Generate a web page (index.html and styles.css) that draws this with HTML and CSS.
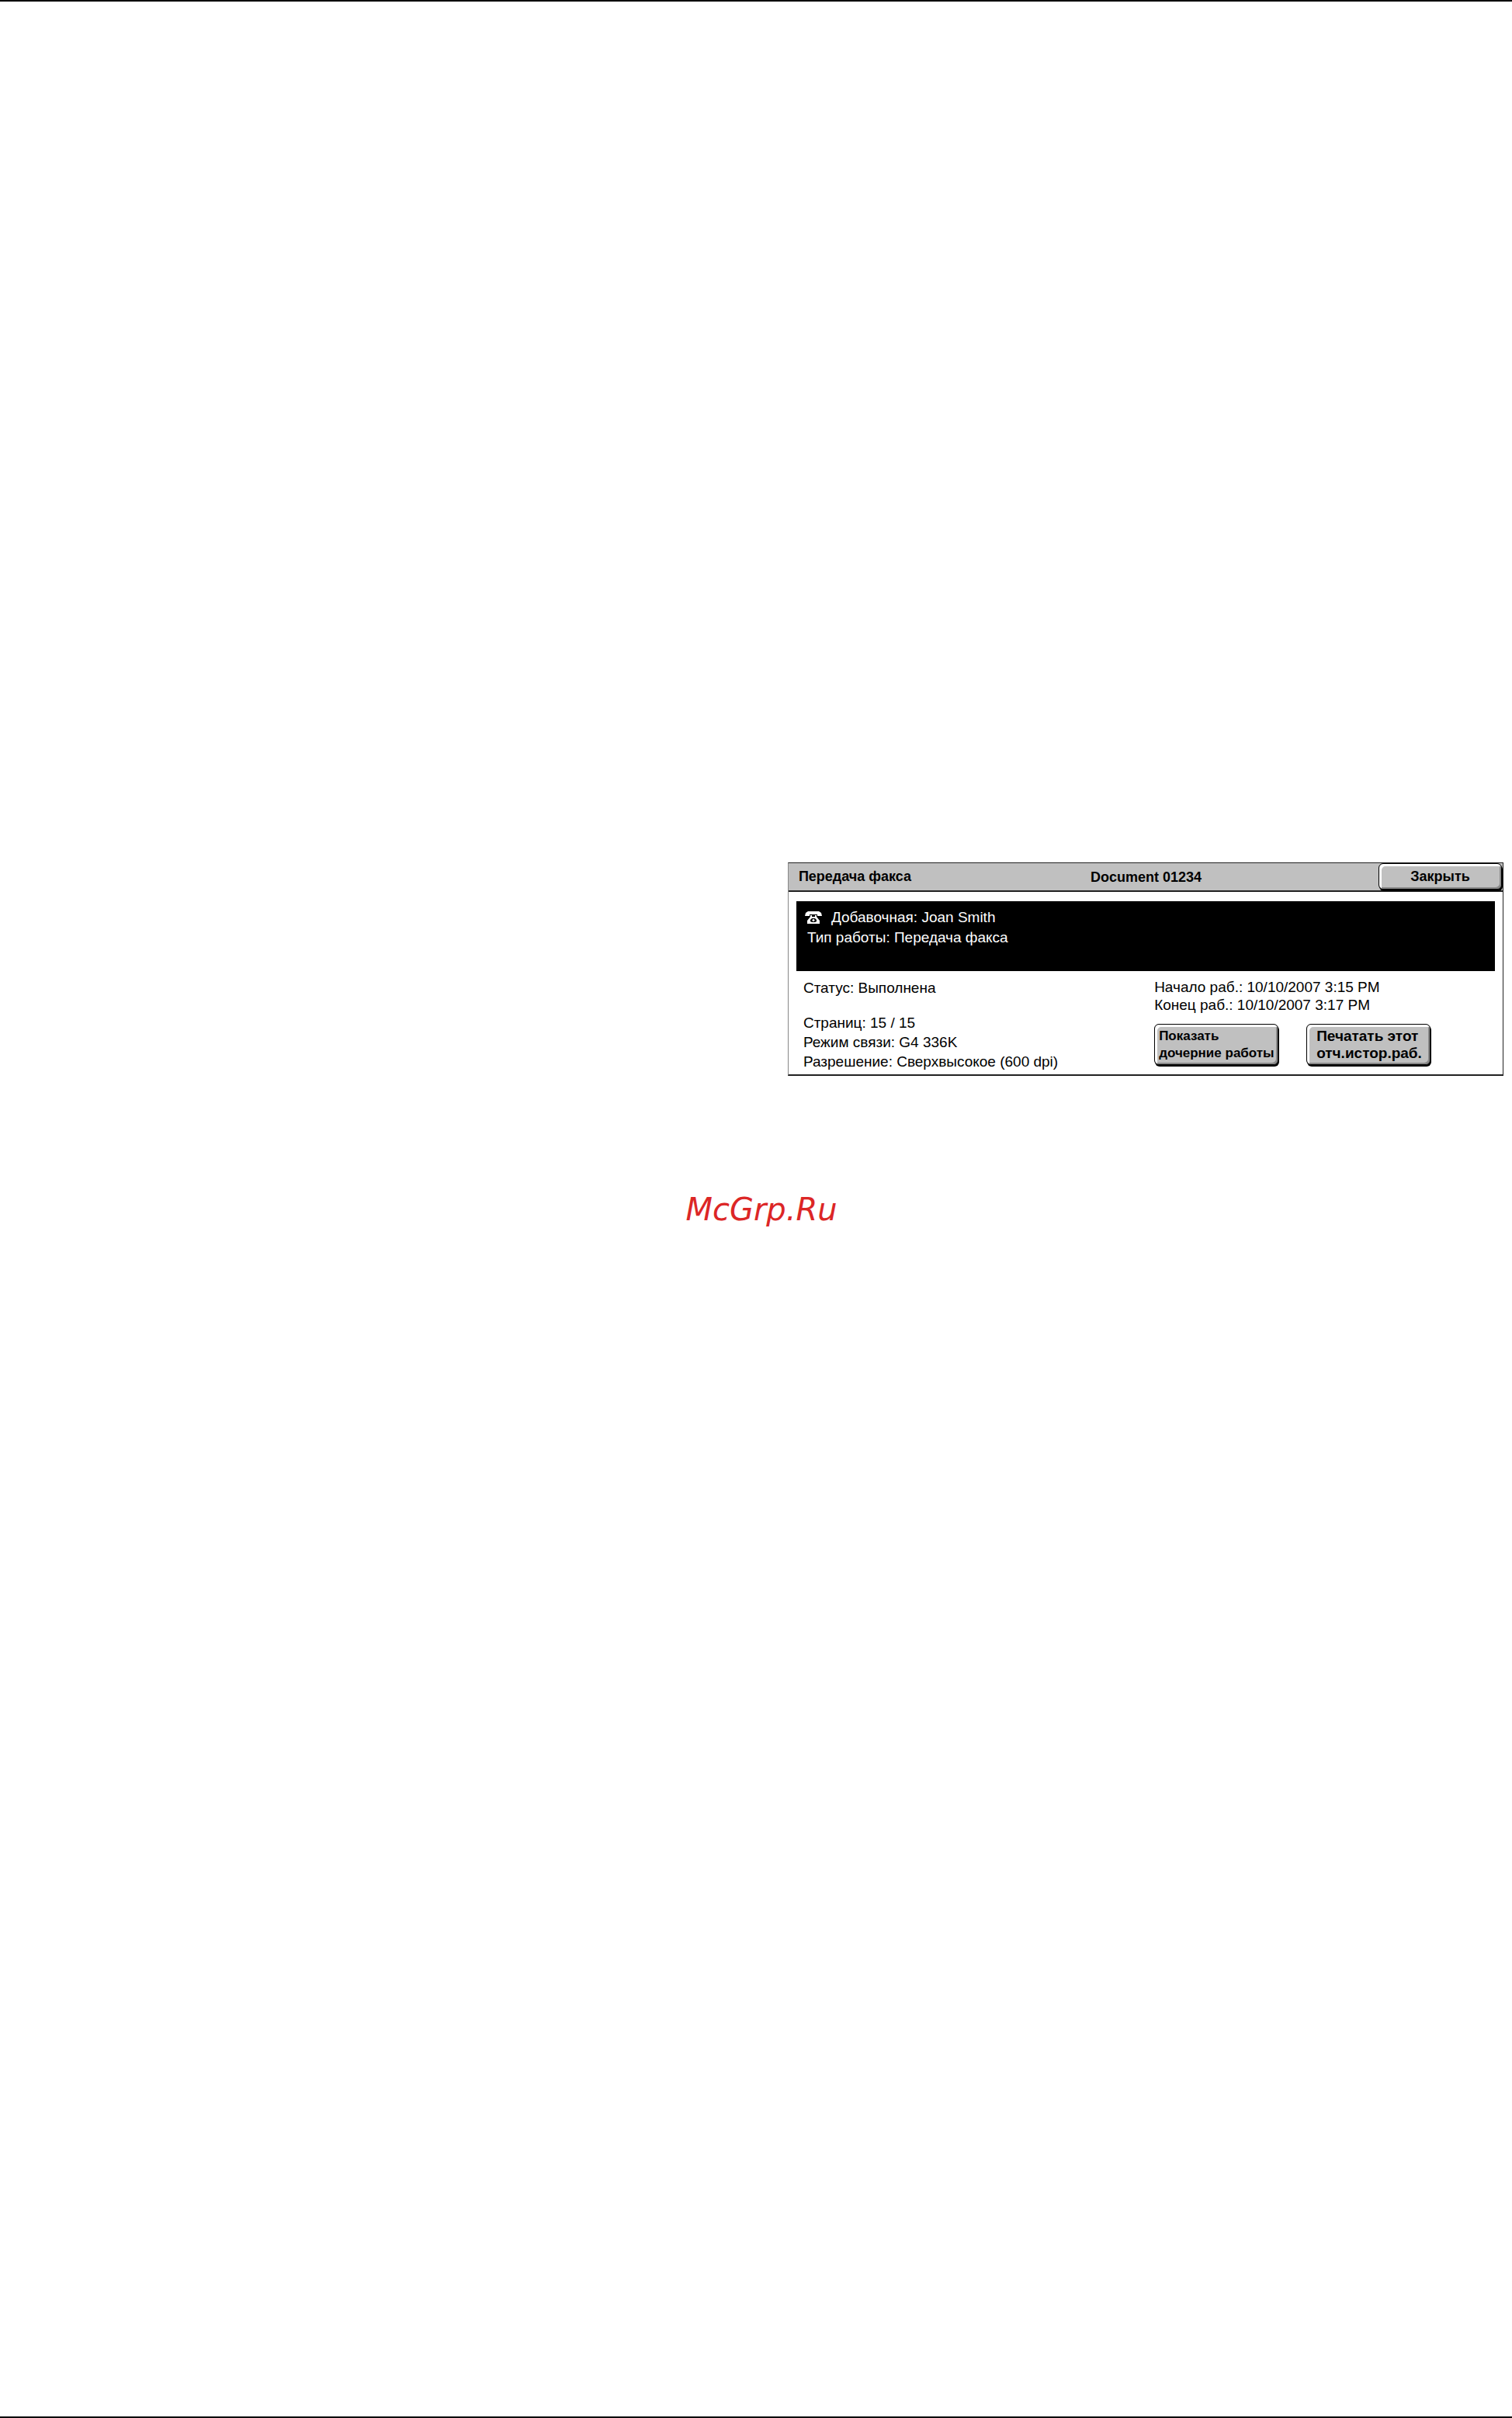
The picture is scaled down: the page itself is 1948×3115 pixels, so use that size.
FILE: index.html
```html
<!DOCTYPE html>
<html lang="ru">
<head>
  <meta charset="UTF-8" />
  <meta name="viewport" content="width=device-width, initial-scale=1.0" />
  <title>Передача факса</title>
  <link rel="stylesheet" href="styles.css">
</head>
<body>
  <main class="page">
    <section class="panel">
      <header class="panel-header">
        <h1 class="title">Передача факса</h1>
        <span class="document">Document 01234</span>
        <button type="button" class="btn btn-close">Закрыть</button>
      </header>
      <div class="job">
        <div class="job-line">
          <svg class="phone" viewBox="0 0 22 16" aria-hidden="true">
            <path fill="#fff" fill-rule="evenodd" d="M4 0h14l3 2 1 4h-6V4H6v2H0l1-4zM7 5h2v2h4V5h2v2l4 5v4H3v-4l4-5zM9 9l-2 2v2l2 1h4l2-1v-2l-2-2z"/>
            <circle cx="11" cy="11.500" r="1.500" fill="#fff"/>
          </svg>
          <span>Добавочная: Joan Smith</span>
        </div>
        <div class="job-line job-type">Тип работы: Передача факса</div>
      </div>
      <div class="details">
        <div class="column">
          <div class="status">Статус: Выполнена</div>
          <div>Страниц: 15 / 15</div>
          <div>Режим связи: G4 336K</div>
          <div>Разрешение: Сверхвысокое (600 dpi)</div>
        </div>
        <div class="column times">
          <div>Начало раб.: 10/10/2007 3:15 PM</div>
          <div>Конец раб.: 10/10/2007 3:17 PM</div>
          <div class="actions">
            <button type="button" class="btn btn-children">Показать<br>дочерние работы</button>
            <button type="button" class="btn btn-print">Печатать этот<br>отч.истор.раб.</button>
          </div>
        </div>
      </div>
    </section>
    <p class="site">McGrp.Ru</p>
  </main>
</body>
</html>
```
FILE: styles.css
```css
* {
  box-sizing: border-box;
}
body {
  margin: 0;
  background: #fff;
  color: #000;
  font-family: "Liberation Sans", Arial, sans-serif;
}
.page {
  min-height: 100vh;
  padding-top: 1109px;
  border-top: 2px solid #000;
  border-bottom: 2px solid #000;
}
.panel {
  margin: 0 11px 0 52.1%;
  border: 1px solid #222;
  border-left-color: #888;
  border-bottom-width: 2px;
  font-size: 19px;
  line-height: 25px;
}
.panel-header {
  display: grid;
  grid-template-columns: 1fr auto 1fr;
  align-items: center;
  height: 37px;
  padding: 0 0 0 13px;
  background: #c0c0c0;
  border-bottom: 2px solid #222;
  font-size: 18px;
  font-weight: bold;
}
.title {
  margin: 0;
  font-size: 18px;
}
.document {
  padding: 2px 12px 0 0;
}
.btn {
  padding: 0;
  background: #c0c0c0;
  color: #000;
  border: 1px solid #000;
  border-radius: 6px;
  box-shadow: inset 3px 3px 0 #fff, inset -2px -2px 0 #888, 1px 2px 0 #000;
  font: bold 18px/22px "Liberation Sans", Arial, sans-serif;
}
.btn-close {
  justify-self: end;
  align-self: start;
  width: 159px;
  height: 34px;
  margin-right: 1px;
}
.job {
  min-height: 90px;
  margin: 12px 10px 0 10px;
  padding: 8px 11px;
  background: #000;
  color: #fff;
  line-height: 26px;
}
.job-line {
  display: flex;
  align-items: center;
  gap: 12px;
}
.job-type {
  padding-left: 3px;
}
.phone {
  width: 22px;
  height: 16px;
}
.details {
  display: grid;
  grid-template-columns: 51% 1fr;
  padding: 9px 0 4px 0;
}
.column {
  padding-left: 19px;
}
.status {
  margin-bottom: 20px;
}
.times {
  padding-left: 2px;
  line-height: 23px;
}
.actions {
  display: flex;
  gap: 36px;
  margin-top: 13px;
}
.actions .btn {
  width: 160px;
  height: 53px;
  text-align: left;
  white-space: nowrap;
}
.actions .btn-children {
  padding-left: 5px;
  font-size: 17px;
}
.actions .btn-print {
  padding-left: 12px;
  font-size: 19px;
}
.site {
  margin: 150px 0 0 0;
  padding-left: 14px;
  color: #dc2626;
  font: italic 40px/44px "DejaVu Sans", sans-serif;
  text-align: center;
}
```
